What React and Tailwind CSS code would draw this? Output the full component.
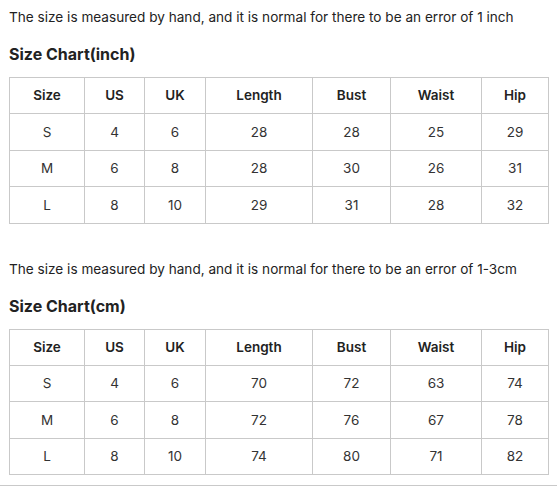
const charts = [
  {
    note: "The size is measured by hand, and it is normal for there to be an error of 1 inch",
    title: "Size Chart(inch)",
    rows: [
      ["S", "4", "6", "28", "28", "25", "29"],
      ["M", "6", "8", "28", "30", "26", "31"],
      ["L", "8", "10", "29", "31", "28", "32"],
    ],
  },
  {
    note: "The size is measured by hand, and it is normal for there to be an error of 1-3cm",
    title: "Size Chart(cm)",
    rows: [
      ["S", "4", "6", "70", "72", "63", "74"],
      ["M", "6", "8", "72", "76", "67", "78"],
      ["L", "8", "10", "74", "80", "71", "82"],
    ],
  },
];

const headers = ["Size", "US", "UK", "Length", "Bust", "Waist", "Hip"];
const widths = ["w-[75px]", "w-[60px]", "w-[61px]", "w-[107px]", "w-[78px]", "w-[91px]", "w-[67px]"];

function SizeTable({ rows }) {
  return (
    <table className="table-fixed border-collapse w-[539px] text-[13.5px] text-[#333]">
      <colgroup>
        {widths.map((w, i) => (
          <col key={i} className={w} />
        ))}
      </colgroup>
      <thead>
        <tr>
          {headers.map((h) => (
            <th key={h} className="h-[36px] border border-[#c9c9c9] text-center font-semibold text-[#222]">
              {h}
            </th>
          ))}
        </tr>
      </thead>
      <tbody>
        {rows.map((row, r) => (
          <tr key={r}>
            {row.map((cell, c) => (
              <td key={c} className="h-[36.5px] border border-[#c9c9c9] text-center">
                {cell}
              </td>
            ))}
          </tr>
        ))}
      </tbody>
    </table>
  );
}

export default function App() {
  return (
    <div className="w-[557px] h-[487px] bg-white font-['Inter',sans-serif] text-[#222] overflow-hidden">
      <div className="pl-[9px] pt-[7px] border-b border-[#c9c9c9] pb-[10px]">
        {charts.map((chart, i) => (
          <div key={i} className={i > 0 ? "mt-[35px]" : ""}>
            <p className="text-[13.6px] leading-[20px]">{chart.note}</p>
            <h2 className="mt-[15px] text-[16px] leading-[24px] font-bold">{chart.title}</h2>
            <div className="mt-[11px]">
              <SizeTable rows={chart.rows} />
            </div>
          </div>
        ))}
      </div>
    </div>
  );
}
